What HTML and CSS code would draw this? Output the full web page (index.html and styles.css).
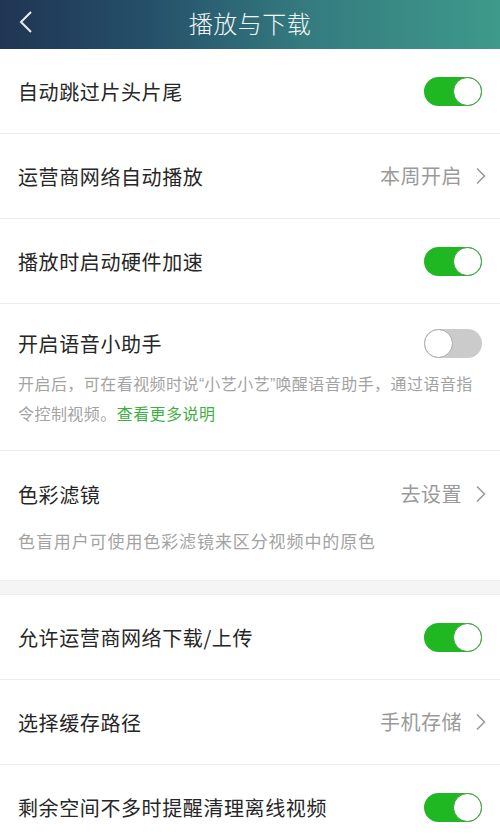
FILE: index.html
```html
<!DOCTYPE html>
<html lang="zh-CN">
<head>
<meta charset="utf-8">
<title>播放与下载</title>
<link rel="stylesheet" href="styles.css">
</head>
<body>
<div class="header">
  <svg class="back" width="16" height="24" viewBox="0 0 16 24"><path d="M13 2 L3 12 L13 22" fill="none" stroke="#e8eef0" stroke-width="2"/></svg>
  <div class="title">播放与下载</div>
</div>
<div class="list">
  <div class="row"><span class="label">自动跳过片头片尾</span><span class="switch on"><span class="knob"></span></span></div>
  <div class="row"><span class="label">运营商网络自动播放</span><span class="value">本周开启<svg class="chev" width="12" height="18" viewBox="0 0 12 18"><path d="M2 1.5 L9.5 9 L2 16.5" fill="none" stroke="#9a9a9a" stroke-width="1.6"/></svg></span></div>
  <div class="row"><span class="label">播放时启动硬件加速</span><span class="switch on"><span class="knob"></span></span></div>
  <div class="block voice">
    <div class="block-head"><span class="label">开启语音小助手</span><span class="switch off"><span class="knob"></span></span></div>
    <p class="desc">开启后，可在看视频时说<span class="q">“</span>小艺小艺<span class="q">”</span>唤醒语音助手，通过语音指令控制视频。<span class="link">查看更多说明</span></p>
  </div>
  <div class="block color">
    <div class="block-head"><span class="label">色彩滤镜</span><span class="value">去设置<svg class="chev" width="12" height="18" viewBox="0 0 12 18"><path d="M2 1.5 L9.5 9 L2 16.5" fill="none" stroke="#9a9a9a" stroke-width="1.6"/></svg></span></div>
    <p class="desc">色盲用户可使用色彩滤镜来区分视频中的原色</p>
  </div>
  <div class="gap"></div>
  <div class="row"><span class="label">允许运营商网络下载/上传</span><span class="switch on"><span class="knob"></span></span></div>
  <div class="row"><span class="label">选择缓存路径</span><span class="value">手机存储<svg class="chev" width="12" height="18" viewBox="0 0 12 18"><path d="M2 1.5 L9.5 9 L2 16.5" fill="none" stroke="#9a9a9a" stroke-width="1.6"/></svg></span></div>
  <div class="row last"><span class="label">剩余空间不多时提醒清理离线视频</span><span class="switch on"><span class="knob"></span></span></div>
</div>
</body>
</html>
```
FILE: styles.css
```css
* { box-sizing: border-box; }
html, body { margin: 0; padding: 0; }
body {
  width: 500px;
  height: 840px;
  overflow: hidden;
  background: #fff;
  font-family: "Noto Sans CJK SC", "Noto Sans", sans-serif;
  color: #262626;
}
.header {
  height: 49px;
  background: linear-gradient(90deg, #1f3553 0%, #25506a 30%, #347a7f 60%, #3e9a8b 100%);
  display: flex;
  align-items: center;
  justify-content: center;
  position: relative;
}
.back {
  position: absolute;
  left: 18px;
  top: 10px;
}
.title {
  color: #f2f6f6;
  font-size: 24px;
  line-height: 30px;
  margin-top: -4px;
  letter-spacing: 0.5px;
  font-weight: 300;
}
.row {
  height: 85px;
  padding: 0 18px;
  display: flex;
  align-items: center;
  justify-content: space-between;
  border-bottom: 1px solid #ececec;
}
.row.last { border-bottom: none; }
.label {
  font-size: 20px;
  line-height: 28px;
  letter-spacing: 0.6px;
  color: #262626;
  margin-top: 1px;
}
.value {
  font-size: 20px;
  line-height: 28px;
  letter-spacing: 0.5px;
  color: #9a9a9a;
  display: flex;
  align-items: center;
  gap: 13px;
  margin-right: -5px;
}
.switch {
  width: 58px;
  height: 29px;
  border-radius: 15px;
  display: flex;
  align-items: center;
}
.switch.on { background: #1fb823; justify-content: flex-end; }
.switch.off { background: #cbcbcb; justify-content: flex-start; }
.knob {
  width: 29px;
  height: 29px;
  border-radius: 50%;
  background: #fff;
  border: 1px solid #a9a9a9;
}
.switch.on .knob { border-color: #3f9a3f; }
.block {
  padding: 0 18px;
  border-bottom: 1px solid #ececec;
}
.block-head {
  display: flex;
  align-items: center;
  justify-content: space-between;
  height: 28px;
}
.desc {
  margin: 0;
  font-size: 16px;
  line-height: 30px;
  color: #a3a3a3;
}
.voice { padding-top: 25px; padding-bottom: 22px; }
.voice .desc { margin-top: 11px; letter-spacing: 0.45px; height: 60px; }
.q { font-family: "Liberation Sans", sans-serif; letter-spacing: 0; line-height: 0; }
.color { padding-top: 29px; padding-bottom: 24px; }
.color .desc { margin-top: 18px; font-size: 17px; letter-spacing: 0.9px; }
.link { color: #3eb041; }
.gap {
  height: 14px;
  background: #f5f5f5;
  border-bottom: 1px solid #eeeeee;
}
```
